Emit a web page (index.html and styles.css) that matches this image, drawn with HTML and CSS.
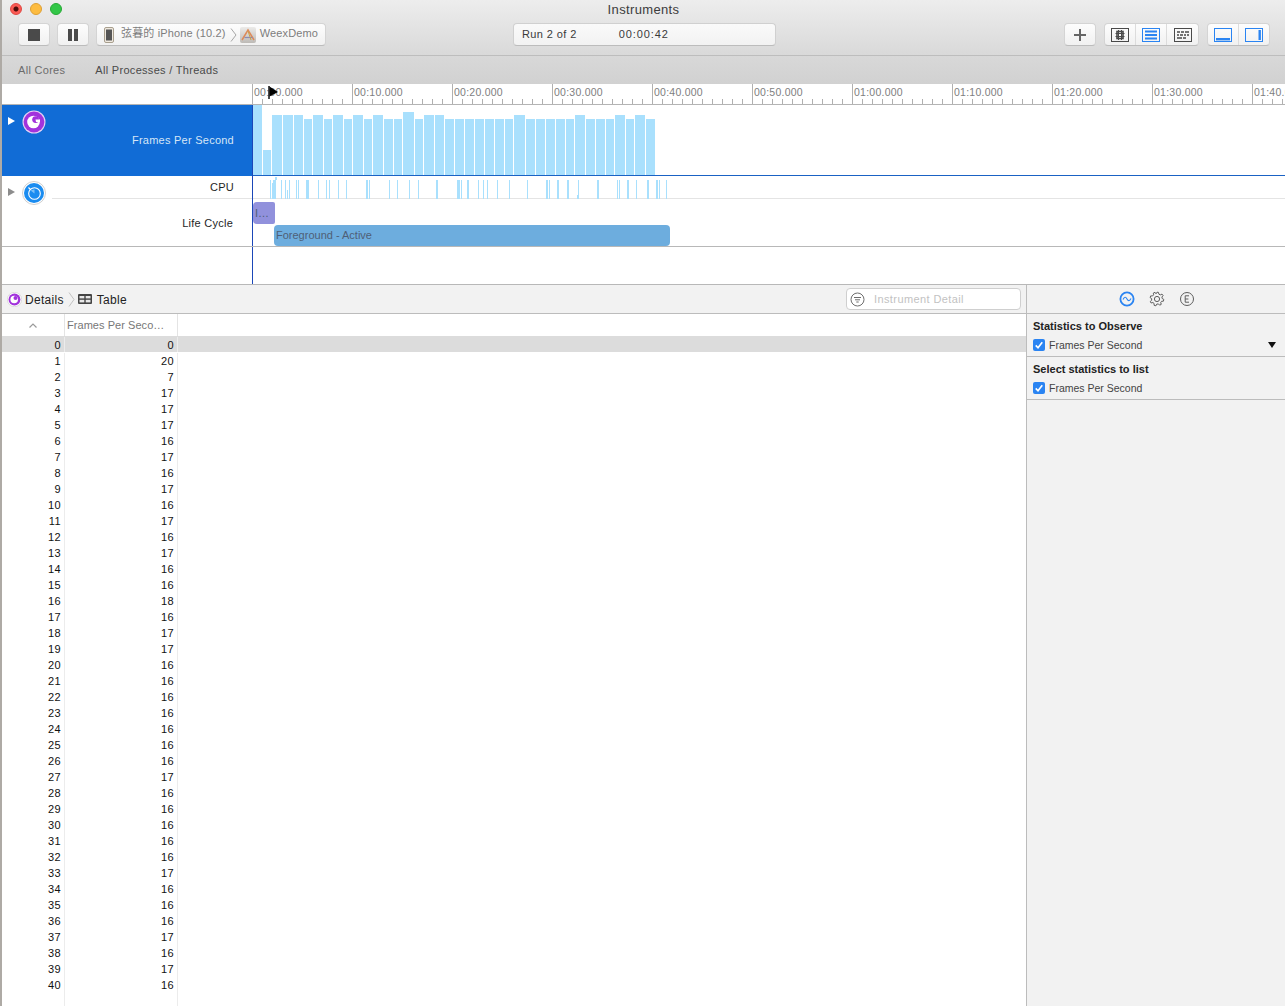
FILE: index.html
```html
<!DOCTYPE html>
<html lang="zh">
<head>
    <meta charset="UTF-8">
    <title>Instruments</title>
    <link rel="stylesheet" href="styles.css">
</head>
<body>
<div class="window">
    <header class="toolbar">
        <div class="title-row">
            <div class="lights">
                <span class="light red"></span>
                <span class="light yellow"></span>
                <span class="light green"></span>
            </div>
            <div class="title">Instruments</div>
        </div>
        <div class="tool-row">
            <button class="btn btn-icon"><span class="stop"></span></button>
            <button class="btn btn-icon"><span class="pause"></span></button>
            <div class="btn target">
                <svg class="phone" width="10" height="16" viewBox="0 0 10 16"><rect x="0.5" y="0.5" width="9" height="15" rx="1.5" fill="#efe9df" stroke="#a89f8e"/><rect x="2" y="2.5" width="6" height="11" fill="#555"/></svg>
                <span class="target-name">弦暮的 iPhone (10.2)</span>
                <svg class="crumb" width="7" height="14" viewBox="0 0 7 14"><path d="M1 0.5 L6 7 L1 13.5" fill="none" stroke="#a5a5a5"/></svg>
                <svg class="app" width="16" height="16" viewBox="0 0 16 16"><defs><linearGradient id="appbg" x1="0" y1="0" x2="0" y2="1"><stop offset="0" stop-color="#ecebe9"/><stop offset="1" stop-color="#bdbab6"/></linearGradient></defs><rect width="16" height="16" rx="2" fill="url(#appbg)"/><path d="M2 13 L8 3 L14 13" fill="none" stroke="#dd8a5a" stroke-width="1.5"/><path d="M4.5 10.5 H12.5" stroke="#8d8ab0" stroke-width="1.2"/><path d="M8 4 L11 13" stroke="#c9a24e" stroke-width="1"/></svg>
                <span class="target-name">WeexDemo</span>
            </div>
            <div class="lcd">
                <span class="lcd-run">Run 2 of 2</span>
                <span class="lcd-time">00:00:42</span>
            </div>
            <div class="tool-right">
                <button class="btn btn-plus">
                    <svg width="14" height="14" viewBox="0 0 14 14"><path d="M7 1 V13 M1 7 H13" stroke="#666" stroke-width="2"/></svg>
                </button>
                <div class="btn-group group-views">
                    <button class="seg"><svg width="18" height="14" viewBox="0 0 18 14"><rect x="0.5" y="0.5" width="17" height="13" fill="none" stroke="#4a4a4a"/><rect x="6" y="3.5" width="6" height="7" fill="none" stroke="#4a4a4a" stroke-width="1.6"/><path d="M7.5 2 V12 M10.5 2 V12 M4.5 5.5 H13.5 M4.5 8.5 H13.5" stroke="#4a4a4a"/></svg></button>
                    <button class="seg"><svg width="18" height="14" viewBox="0 0 18 14"><rect x="0.5" y="0.5" width="17" height="13" fill="none" stroke="#2a84f2"/><path d="M3 3.5 H15 M3 7 H15 M3 10.5 H15" stroke="#2a84f2" stroke-width="2"/></svg></button>
                    <button class="seg"><svg width="18" height="14" viewBox="0 0 18 14"><rect x="0.5" y="0.5" width="17" height="13" fill="none" stroke="#4a4a4a"/><path d="M3 4 H6 M7 4 H10 M11 4 H15 M3 7 H5 M6 7 H9 M10 7 H12 M13 7 H15 M3 10 H8 M9 10 H12" stroke="#4a4a4a" stroke-width="1.6"/></svg></button>
                </div>
                <div class="btn-group group-panes">
                    <button class="seg"><svg width="18" height="14" viewBox="0 0 18 14"><rect x="0.5" y="0.5" width="17" height="13" fill="none" stroke="#2a84f2"/><rect x="2" y="10" width="14" height="2.4" fill="#2a84f2"/></svg></button>
                    <button class="seg"><svg width="18" height="14" viewBox="0 0 18 14"><rect x="0.5" y="0.5" width="17" height="13" fill="none" stroke="#2a84f2"/><rect x="13.5" y="2" width="2.4" height="10" fill="#2a84f2"/></svg></button>
                </div>
            </div>
        </div>
    </header>

    <div class="strategy-bar">
        <span class="strategy strategy-cores">All Cores</span>
        <span class="strategy strategy-threads">All Processes / Threads</span>
    </div>

    <section class="timeline">
        <div class="ruler-row">
            <div class="ruler-gutter"></div>
            <div class="ruler">
                <span class="mark">00:00.000</span>
                <span class="mark">00:10.000</span>
                <span class="mark">00:20.000</span>
                <span class="mark">00:30.000</span>
                <span class="mark">00:40.000</span>
                <span class="mark">00:50.000</span>
                <span class="mark">01:00.000</span>
                <span class="mark">01:10.000</span>
                <span class="mark">01:20.000</span>
                <span class="mark">01:30.000</span>
                <span class="mark">01:40.000</span>
            </div>
            <svg class="playhead" width="12" height="16" viewBox="0 0 12 16"><path d="M1 0 V13" stroke="#000" stroke-width="1.4"/><path d="M1.5 0.5 L10 6 L1.5 10.5 Z" fill="#000"/></svg>
        </div>

        <div class="track track-fps">
            <div class="track-head head-selected">
                <span class="arrow arrow-white"></span>
                <svg class="inst-icon" width="24" height="24" viewBox="0 0 24 24"><circle cx="12" cy="12" r="11.5" fill="#e6d2f4"/><circle cx="12" cy="12" r="10.4" fill="#a233dc"/><circle cx="11.5" cy="12" r="6.3" fill="#fff"/><circle cx="13.6" cy="9.6" r="3.4" fill="#a233dc"/><path d="M13.5 9.5 H18 V12 H14 Z" fill="#fff"/></svg>
                <span class="track-label">Frames Per Second</span>
            </div>
            <div class="track-body fps-bars">
                <i class="bar" style="width:9px;height:70px"></i>
                <i class="bar" style="width:8px;height:25px"></i>
                <i class="bar" style="width:10px;height:60px"></i>
                <i class="bar" style="width:10px;height:60px"></i>
                <i class="bar" style="width:9px;height:60px"></i>
                <i class="bar" style="width:8px;height:56px"></i>
                <i class="bar" style="width:10px;height:60px"></i>
                <i class="bar" style="width:8px;height:56px"></i>
                <i class="bar" style="width:10px;height:60px"></i>
                <i class="bar" style="width:8px;height:56px"></i>
                <i class="bar" style="width:10px;height:60px"></i>
                <i class="bar" style="width:8px;height:56px"></i>
                <i class="bar" style="width:10px;height:60px"></i>
                <i class="bar" style="width:9px;height:56px"></i>
                <i class="bar" style="width:8px;height:56px"></i>
                <i class="bar" style="width:11px;height:63px"></i>
                <i class="bar" style="width:8px;height:56px"></i>
                <i class="bar" style="width:10px;height:60px"></i>
                <i class="bar" style="width:9px;height:60px"></i>
                <i class="bar" style="width:9px;height:56px"></i>
                <i class="bar" style="width:9px;height:56px"></i>
                <i class="bar" style="width:9px;height:56px"></i>
                <i class="bar" style="width:9px;height:56px"></i>
                <i class="bar" style="width:9px;height:56px"></i>
                <i class="bar" style="width:9px;height:56px"></i>
                <i class="bar" style="width:8px;height:56px"></i>
                <i class="bar" style="width:11px;height:60px"></i>
                <i class="bar" style="width:9px;height:56px"></i>
                <i class="bar" style="width:9px;height:56px"></i>
                <i class="bar" style="width:9px;height:56px"></i>
                <i class="bar" style="width:9px;height:56px"></i>
                <i class="bar" style="width:8px;height:56px"></i>
                <i class="bar" style="width:10px;height:60px"></i>
                <i class="bar" style="width:9px;height:56px"></i>
                <i class="bar" style="width:9px;height:56px"></i>
                <i class="bar" style="width:8px;height:56px"></i>
                <i class="bar" style="width:10px;height:60px"></i>
                <i class="bar" style="width:8px;height:56px"></i>
                <i class="bar" style="width:10px;height:60px"></i>
                <i class="bar" style="width:9px;height:56px"></i>
            </div>
        </div>

        <div class="track track-cpu">
            <div class="track-head">
                <span class="arrow arrow-grey"></span>
                <svg class="inst-icon cpu-icon" width="24" height="24" viewBox="0 0 24 24"><circle cx="12" cy="12" r="11.5" fill="#fff" stroke="#cfcfcf"/><circle cx="12" cy="12" r="10" fill="#1a8cf0"/><circle cx="12.5" cy="12.5" r="5.8" fill="none" stroke="#fff" stroke-width="1.1"/><path d="M12.5 12.5 V8.2 L8.6 9.6 Z" fill="#7cc0f7"/><path d="M6.5 6.5 L8.8 8.8" stroke="#fff" stroke-width="1.2"/></svg>
                <span class="track-label label-cpu">CPU</span>
                <span class="head-rule"></span>
                <span class="track-label label-life">Life Cycle</span>
            </div>
            <div class="track-body cpu-body">
                <svg class="cpu-ticks" width="420" height="23" viewBox="0 0 420 23">
                    <path fill="#a9e0fd" d="M17 4h1v19h-1zM19 7h1v16h-1zM20 4h2v19h-2zM22 1h1v22h-1zM23 1h1v3h-1zM28 4h1v19h-1zM32 4h1v19h-1zM34 14h1v9h-1zM36 4h1v19h-1zM43 4h1v19h-1zM45 4h1v19h-1zM53 4h2v19h-2zM55 4h1v19h-1zM65 4h1v19h-1zM73 4h1v19h-1zM76 4h1v19h-1zM85 4h1v19h-1zM93 4h1v19h-1zM113 4h2v19h-2zM116 4h1v19h-1zM136 4h1v19h-1zM144 4h1v19h-1zM156 4h1v19h-1zM165 4h1v19h-1zM183 4h2v19h-2zM204 4h3v19h-3zM208 4h1v19h-1zM214 4h2v19h-2zM225 4h1v19h-1zM230 4h1v19h-1zM234 4h1v19h-1zM244 4h1v19h-1zM256 4h1v19h-1zM274 4h1v19h-1zM293 4h2v19h-2zM296 4h1v19h-1zM304 4h2v19h-2zM314 4h2v19h-2zM324 19h1v4h-1zM325 4h1v19h-1zM344 4h2v19h-2zM364 4h1v19h-1zM366 4h1v19h-1zM374 4h2v19h-2zM383 4h1v19h-1zM394 4h2v19h-2zM403 4h2v19h-2zM406 4h1v19h-1zM413 4h1v19h-1z"/>
                </svg>
                <div class="life-row">
                    <div class="life life-launch">I…</div>
                </div>
                <div class="life-row">
                    <div class="life life-active">Foreground - Active</div>
                </div>
            </div>
        </div>

        <div class="track track-empty">
            <div class="track-head head-empty"></div>
            <div class="track-body"></div>
        </div>
    </section>

    <section class="bottom">
        <div class="detail">
            <div class="jump-bar">
                <svg class="jump-icon" width="15" height="15" viewBox="0 0 24 24"><circle cx="12" cy="12" r="11.5" fill="#fff" stroke="#ccc"/><circle cx="12" cy="12" r="9.5" fill="#a233dc"/><circle cx="11.5" cy="12" r="6" fill="#fff"/><circle cx="13.6" cy="9.6" r="3.2" fill="#a233dc"/></svg>
                <span class="jump-text">Details</span>
                <svg class="jump-crumb" width="7" height="15" viewBox="0 0 7 15"><path d="M1 0.5 L6 7.5 L1 14.5" fill="none" stroke="#c2c2c2"/></svg>
                <svg class="jump-table" width="14" height="10" viewBox="0 0 14 10"><rect width="14" height="10" rx="1" fill="#444"/><rect x="1.5" y="2" width="4.8" height="2.4" fill="#e8e8e8"/><rect x="7.7" y="2" width="4.8" height="2.4" fill="#e8e8e8"/><rect x="1.5" y="5.8" width="4.8" height="2.6" fill="#e8e8e8"/><rect x="7.7" y="5.8" width="4.8" height="2.6" fill="#e8e8e8"/></svg>
                <span class="jump-text">Table</span>
                <div class="filter">
                    <svg width="15" height="15" viewBox="0 0 15 15"><circle cx="7.5" cy="7.5" r="6.5" fill="none" stroke="#6e6e6e"/><path d="M4 5.5 H11 M5 7.8 H10 M6.3 10 H8.7" stroke="#6e6e6e"/></svg>
                    <span class="filter-text">Instrument Detail</span>
                </div>
            </div>
            <div class="table-head">
                <div class="col-index"><svg width="8" height="5" viewBox="0 0 8 5"><path d="M0.5 4.5 L4 1 L7.5 4.5" fill="none" stroke="#9a9a9a" stroke-width="1.2"/></svg></div>
                <div class="col-value">Frames Per Seco…</div>
            </div>
            <div class="table-body">
                <div class="row row-selected"><span class="col-index">0</span><span class="col-value">0</span></div>
                <div class="row"><span class="col-index">1</span><span class="col-value">20</span></div>
                <div class="row"><span class="col-index">2</span><span class="col-value">7</span></div>
                <div class="row"><span class="col-index">3</span><span class="col-value">17</span></div>
                <div class="row"><span class="col-index">4</span><span class="col-value">17</span></div>
                <div class="row"><span class="col-index">5</span><span class="col-value">17</span></div>
                <div class="row"><span class="col-index">6</span><span class="col-value">16</span></div>
                <div class="row"><span class="col-index">7</span><span class="col-value">17</span></div>
                <div class="row"><span class="col-index">8</span><span class="col-value">16</span></div>
                <div class="row"><span class="col-index">9</span><span class="col-value">17</span></div>
                <div class="row"><span class="col-index">10</span><span class="col-value">16</span></div>
                <div class="row"><span class="col-index">11</span><span class="col-value">17</span></div>
                <div class="row"><span class="col-index">12</span><span class="col-value">16</span></div>
                <div class="row"><span class="col-index">13</span><span class="col-value">17</span></div>
                <div class="row"><span class="col-index">14</span><span class="col-value">16</span></div>
                <div class="row"><span class="col-index">15</span><span class="col-value">16</span></div>
                <div class="row"><span class="col-index">16</span><span class="col-value">18</span></div>
                <div class="row"><span class="col-index">17</span><span class="col-value">16</span></div>
                <div class="row"><span class="col-index">18</span><span class="col-value">17</span></div>
                <div class="row"><span class="col-index">19</span><span class="col-value">17</span></div>
                <div class="row"><span class="col-index">20</span><span class="col-value">16</span></div>
                <div class="row"><span class="col-index">21</span><span class="col-value">16</span></div>
                <div class="row"><span class="col-index">22</span><span class="col-value">16</span></div>
                <div class="row"><span class="col-index">23</span><span class="col-value">16</span></div>
                <div class="row"><span class="col-index">24</span><span class="col-value">16</span></div>
                <div class="row"><span class="col-index">25</span><span class="col-value">16</span></div>
                <div class="row"><span class="col-index">26</span><span class="col-value">16</span></div>
                <div class="row"><span class="col-index">27</span><span class="col-value">17</span></div>
                <div class="row"><span class="col-index">28</span><span class="col-value">16</span></div>
                <div class="row"><span class="col-index">29</span><span class="col-value">16</span></div>
                <div class="row"><span class="col-index">30</span><span class="col-value">16</span></div>
                <div class="row"><span class="col-index">31</span><span class="col-value">16</span></div>
                <div class="row"><span class="col-index">32</span><span class="col-value">16</span></div>
                <div class="row"><span class="col-index">33</span><span class="col-value">17</span></div>
                <div class="row"><span class="col-index">34</span><span class="col-value">16</span></div>
                <div class="row"><span class="col-index">35</span><span class="col-value">16</span></div>
                <div class="row"><span class="col-index">36</span><span class="col-value">16</span></div>
                <div class="row"><span class="col-index">37</span><span class="col-value">17</span></div>
                <div class="row"><span class="col-index">38</span><span class="col-value">16</span></div>
                <div class="row"><span class="col-index">39</span><span class="col-value">17</span></div>
                <div class="row"><span class="col-index">40</span><span class="col-value">16</span></div>
                <div class="row row-filler"><span class="col-index"></span><span class="col-value"></span></div>
            </div>
        </div>

        <aside class="inspector">
            <div class="inspector-tabs">
                <svg width="16" height="16" viewBox="0 0 16 16"><circle cx="8" cy="8" r="6.6" fill="none" stroke="#2a84f2" stroke-width="1.8"/><path d="M4 8.6 C5.5 5.5 6.8 5.8 8 8 C9.2 10.2 10.5 10.3 12 7.4" fill="none" stroke="#2a84f2" stroke-width="1.1"/></svg>
                <svg width="16" height="16" viewBox="0 0 16 16"><path d="M8 1.2 L9.5 1.4 L9.9 3.2 L11.3 3.9 L13 3.1 L14.1 4.6 L12.9 6 L13.2 7.5 L14.8 8.4 L14.4 10.2 L12.6 10.3 L11.7 11.6 L12.3 13.3 L10.7 14.2 L9.4 12.9 L7.8 13.1 L6.9 14.8 L5.1 14.3 L5.1 12.5 L3.9 11.5 L2.1 12 L1.3 10.4 L2.7 9.2 L2.6 7.6 L1.1 6.6 L1.7 4.9 L3.5 5 L4.6 3.8 L4.3 2.1 L6 1.3 L7 2.8 Z" fill="none" stroke="#5e5e5e"/><circle cx="8" cy="8" r="2.6" fill="none" stroke="#5e5e5e"/></svg>
                <svg width="16" height="16" viewBox="0 0 16 16"><circle cx="8" cy="8" r="6.5" fill="none" stroke="#5e5e5e"/><path d="M10 4.8 H6.2 V11.2 H10 M6.2 8 H9.4" fill="none" stroke="#5e5e5e"/></svg>
            </div>
            <div class="inspector-section">
                <div class="section-title">Statistics to Observe</div>
                <div class="check-row">
                    <span class="check"><svg width="12" height="12" viewBox="0 0 11 11"><path d="M2.5 5.8 L4.6 8 L8.5 3" fill="none" stroke="#fff" stroke-width="1.5"/></svg></span>
                    <span class="check-label">Frames Per Second</span>
                    <span class="drop-arrow"></span>
                </div>
            </div>
            <div class="inspector-section">
                <div class="section-title">Select statistics to list</div>
                <div class="check-row">
                    <span class="check"><svg width="12" height="12" viewBox="0 0 11 11"><path d="M2.5 5.8 L4.6 8 L8.5 3" fill="none" stroke="#fff" stroke-width="1.5"/></svg></span>
                    <span class="check-label">Frames Per Second</span>
                </div>
            </div>
        </aside>
    </section>
</div>
</body>
</html>
```

FILE: styles.css
```css
html, body {
    height: 100%;
}

body {
    margin: 0;
    padding: 0;
    background: #aeaaa5;
    font-family: "Liberation Sans", Arial, "Noto Sans CJK SC", sans-serif;
    font-size: 11px;
    color: #1e1e1e;
    overflow: hidden;
}

button {
    font: inherit;
    padding: 0;
    margin: 0;
}

.window {
    margin-left: 2px;
    height: 1006px;
    display: flex;
    flex-direction: column;
    background: #fff;
}

/* toolbar */
.toolbar {
    height: 55px;
    flex: none;
    background: linear-gradient(#ededed, #d9d9d9);
    border-bottom: 1px solid #bdbdbd;
    box-sizing: content-box;
}

.title-row {
    position: relative;
    height: 22px;
    display: flex;
    align-items: center;
}

.lights {
    display: flex;
    gap: 8px;
    padding-left: 8px;
    margin-top: -4px;
}

.light {
    width: 12px;
    height: 12px;
    border-radius: 50%;
    box-sizing: border-box;
}

.red {
    background: radial-gradient(circle, #4a0d0a 0, #4a0d0a 2px, #fb5b55 3px);
    border: 1px solid #e0443e;
}

.yellow {
    background: #fdbc40;
    border: 1px solid #dea034;
}

.green {
    background: #33c748;
    border: 1px solid #27aa35;
}

.title {
    position: absolute;
    left: 0;
    right: 0;
    top: 2px;
    text-align: center;
    font-size: 13px;
    line-height: 16px;
    letter-spacing: 0.35px;
    color: #3c3c3c;
}

.tool-row {
    display: flex;
    align-items: center;
    height: 23px;
    margin-top: 1px;
    padding-left: 16px;
}

.btn, .btn-group {
    height: 23px;
    box-sizing: border-box;
    background: linear-gradient(#fdfdfd, #f1f1f1);
    border: 1px solid #d4d4d4;
    border-bottom-color: #bcbcbc;
    border-radius: 4px;
}

.btn-icon {
    width: 32px;
    margin-right: 7px;
    display: flex;
    align-items: center;
    justify-content: center;
}

.stop {
    width: 12px;
    height: 12px;
    background: #4a4a4a;
}

.pause {
    width: 10px;
    height: 12px;
    border-left: 4px solid #4a4a4a;
    border-right: 4px solid #4a4a4a;
    box-sizing: border-box;
}

.target {
    width: 230px;
    display: flex;
    align-items: center;
    padding-left: 7px;
}

.target-name {
    color: #7d7d7d;
    font-size: 11px;
    line-height: 15px;
    letter-spacing: 0.15px;
    white-space: nowrap;
    position: relative;
    top: -1px;
}

.phone {
    margin-right: 7px;
}

.crumb {
    margin: 0 3px 0 4px;
}

.app {
    margin-right: 4px;
}

.lcd {
    width: 263px;
    height: 23px;
    box-sizing: border-box;
    margin-left: 187px;
    background: linear-gradient(#fafafa, #f2f2f2);
    border: 1px solid #d0d0d0;
    border-bottom-color: #bcbcbc;
    border-radius: 4px;
    display: flex;
    align-items: center;
    padding: 0 0 2px 8px;
    color: #3a3a3a;
    letter-spacing: 0.4px;
}

.lcd-time {
    margin-left: 42px;
    letter-spacing: 0.9px;
}

.tool-right {
    margin-left: auto;
    display: flex;
    gap: 8px;
    padding-right: 15px;
}

.btn-plus {
    width: 32px;
    display: flex;
    align-items: center;
    justify-content: center;
}

.btn-group {
    display: flex;
}

.seg {
    width: 31px;
    background: none;
    border: none;
    border-right: 1px solid #dcdcdc;
    display: flex;
    align-items: center;
    justify-content: center;
}

.group-panes .seg {
    width: 30.5px;
}

.seg:last-child {
    border-right: none;
}

/* strategy strip */
.strategy-bar {
    height: 28px;
    flex: none;
    background: linear-gradient(#d8d8d8, #d1d1d1);
    display: flex;
    align-items: center;
    color: #5a5a5a;
    letter-spacing: 0.3px;
}

.strategy-cores {
    margin-left: 16px;
    color: #6c6c6c;
}

.strategy-threads {
    margin-left: 30px;
    color: #4a4a4a;
}

/* timeline */
.timeline {
    height: 200px;
    flex: none;
    display: flex;
    flex-direction: column;
    border-bottom: 1px solid #b8b8b8;
    box-sizing: content-box;
}

.ruler-row {
    position: relative;
    height: 21px;
    display: flex;
    flex: none;
}

.ruler-gutter {
    width: 250px;
    flex: none;
    border-bottom: 1px solid #b4b4b4;
    box-sizing: border-box;
}

.ruler {
    flex: 1;
    min-width: 0;
    display: flex;
    overflow: hidden;
    border-bottom: 1px solid #b4b4b4;
    box-sizing: border-box;
    background-image: repeating-linear-gradient(90deg, #b0b0b0 0, #b0b0b0 1px, transparent 1px, transparent 10px);
    background-size: 100% 5px;
    background-position: 0 100%;
    background-repeat: no-repeat;
}

.mark {
    flex: 0 0 100px;
    box-sizing: border-box;
    border-left: 1px solid #b0b0b0;
    padding: 2px 0 0 1px;
    color: #7e7e7e;
    font-size: 10.5px;
    letter-spacing: 0.25px;
    line-height: 13px;
    white-space: nowrap;
}

.playhead {
    position: absolute;
    left: 266px;
    top: 2px;
}

.track {
    display: flex;
    flex: none;
}

.track-fps {
    height: 71px;
}

.track-cpu {
    height: 70px;
    border-bottom: 1px solid #b8b8b8;
    box-sizing: content-box;
}

.track-empty {
    flex: 1;
    height: auto;
}

.track-head {
    position: relative;
    width: 250px;
    flex: none;
    border-right: 1px solid #1b47b8;
    box-sizing: content-box;
}

.head-selected {
    background: #116cd6;
    color: #d6e6f7;
}

.arrow {
    position: absolute;
    left: 6px;
    width: 0;
    height: 0;
    border-style: solid;
    border-width: 4.5px 0 4.5px 7px;
    border-color: transparent;
}

.arrow-white {
    top: 12px;
    border-left-color: #fff;
}

.arrow-grey {
    top: 12px;
    border-left-color: #8c8c8c;
}

.inst-icon {
    position: absolute;
    left: 20px;
    top: 5px;
}

.cpu-icon {
    top: 5px;
}

.track-label {
    position: absolute;
    right: 18px;
    letter-spacing: 0.25px;
    line-height: 14px;
}

.head-selected .track-label {
    top: 28px;
}

.label-cpu {
    top: 4px;
}

.label-life {
    top: 40px;
    right: 19px;
}

.head-rule {
    position: absolute;
    left: 50px;
    right: 0;
    top: 22px;
    height: 1px;
    background: #e4e4e4;
}

.track-body {
    flex: 1;
    min-width: 0;
}

.fps-bars {
    display: flex;
    align-items: flex-end;
    gap: 1px;
    border-bottom: 1px solid #1a62c4;
    box-sizing: border-box;
}

.bar {
    display: block;
    background: #a9e0fd;
    flex: none;
}

.cpu-body {
    position: relative;
    background: linear-gradient(#e4e4e4, #e4e4e4) no-repeat 0 22px / 100% 1px;
    padding-top: 26px;
    box-sizing: border-box;
}

.cpu-ticks {
    position: absolute;
    left: 0;
    top: 0;
}

.life-row {
    height: 23px;
}

.life {
    box-sizing: border-box;
    color: #4f5f76;
    line-height: 21px;
    padding-left: 2px;
    white-space: nowrap;
}

.life-launch {
    width: 22px;
    height: 22px;
    line-height: 22px;
    background: #9191dc;
    border-radius: 4px 2px 2px 4px;
}

.life-active {
    width: 396px;
    height: 21px;
    margin-left: 21px;
    background: #6dadde;
    border-radius: 4px;
}

.head-empty {
    background: #fff;
}

/* bottom part */
.bottom {
    flex: 1;
    min-height: 0;
    display: flex;
    background: #fff;
}

.detail {
    flex: 1;
    min-width: 0;
    border-right: 1px solid #bcbcbc;
    overflow: hidden;
}

.jump-bar {
    height: 28px;
    background: #f2f2f2;
    border-bottom: 1px solid #bcbcbc;
    display: flex;
    align-items: center;
    padding-left: 5px;
    font-size: 12px;
}

.jump-text {
    color: #222;
    letter-spacing: 0.3px;
    padding-top: 1px;
}

.jump-icon {
    margin-right: 3px;
}

.jump-crumb {
    margin: 0 3px 0 4px;
}

.jump-table {
    margin-right: 5px;
}

.filter {
    margin-left: auto;
    margin-right: 5px;
    width: 175px;
    height: 22px;
    box-sizing: border-box;
    background: #fff;
    border: 1px solid #cfcfcf;
    border-radius: 4px;
    display: flex;
    align-items: center;
    gap: 9px;
    padding-left: 3px;
}

.filter-text {
    color: #c2c2c2;
    font-size: 11px;
    letter-spacing: 0.4px;
}

.table-head {
    display: flex;
    height: 22px;
    background: #fff;
    border-bottom: 1px solid #dcdcdc;
    color: #777;
    letter-spacing: 0.05px;
}

.table-head .col-index {
    display: flex;
    align-items: center;
    padding: 0 0 0 27px;
}

.table-head .col-value {
    text-align: left;
    padding: 0 0 0 2px;
    line-height: 22px;
    border-right: 1px solid #e4e4e4;
    border-left: 1px solid #e4e4e4;
}

.col-index {
    width: 62px;
    flex: none;
    text-align: right;
    box-sizing: border-box;
    padding-right: 3px;
}

.col-value {
    width: 114px;
    flex: none;
    text-align: right;
    box-sizing: border-box;
    padding-right: 3px;
    border-left: 1px solid #ececec;
    border-right: 1px solid #ececec;
}

.row {
    display: flex;
    height: 16px;
    line-height: 16px;
    letter-spacing: 0.4px;
    color: #111;
}

.row-selected {
    background: #dcdcdc;
    height: 15px;
    margin-bottom: 1px;
}

.row-filler {
    height: 30px;
}

.inspector {
    width: 258px;
    flex: none;
    background: #f2f2f2;
}

.inspector-tabs {
    height: 28px;
    display: flex;
    align-items: center;
    justify-content: center;
    gap: 14px;
    padding-left: 1px;
    border-bottom: 1px solid #bcbcbc;
}

.inspector-section {
    height: 42px;
    box-sizing: content-box;
    border-bottom: 1px solid #bcbcbc;
    padding: 0 6px;
}

.section-title {
    font-weight: bold;
    color: #222;
    line-height: 14px;
    padding-top: 5px;
}

.check-row {
    display: flex;
    align-items: center;
    margin-top: 6px;
}

.check {
    width: 12px;
    height: 12px;
    border-radius: 2px;
    background: #2a84f2;
    margin-right: 4px;
    display: flex;
}

.check-label {
    color: #444;
    font-size: 10.5px;
}

.drop-arrow {
    margin-left: auto;
    margin-right: 3px;
    width: 0;
    height: 0;
    border-style: solid;
    border-width: 6px 4px 0 4px;
    border-color: #111 transparent transparent;
}
```
